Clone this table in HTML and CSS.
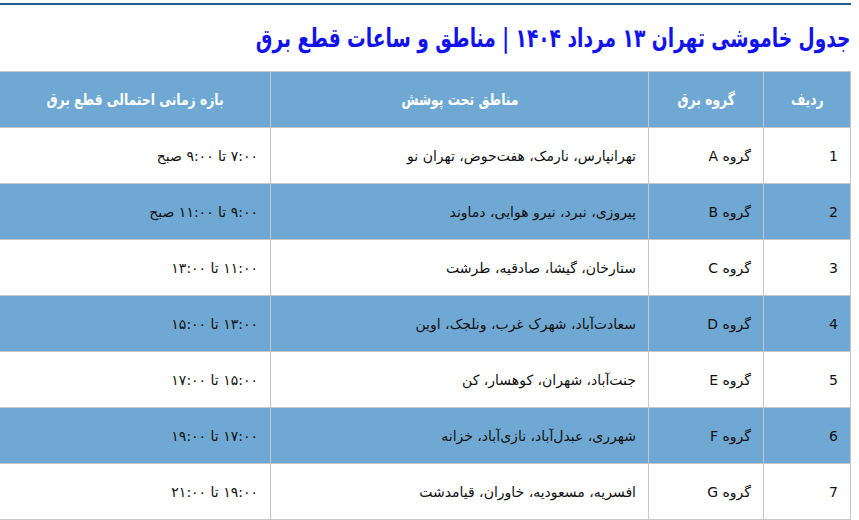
FILE: index.html
```html
<!DOCTYPE html>
<html lang="fa" dir="rtl">
<head>
<meta charset="utf-8">
<title>جدول خاموشی تهران</title>
<link rel="stylesheet" href="styles.css">
</head>
<body>
<div class="page">
  <div class="topline"></div>
  <h1 class="title"><span class="squeeze">جدول خاموشی تهران ۱۳ مرداد ۱۴۰۴ | مناطق و ساعات قطع برق</span></h1>
  <table class="schedule">
    <colgroup>
      <col class="c-num">
      <col class="c-group">
      <col class="c-area">
      <col class="c-time">
    </colgroup>
    <thead>
      <tr>
        <th><span class="squeeze-th">ردیف</span></th>
        <th><span class="squeeze-th">گروه برق</span></th>
        <th><span class="squeeze-th">مناطق تحت پوشش</span></th>
        <th><span class="squeeze-th">بازه زمانی احتمالی قطع برق</span></th>
      </tr>
    </thead>
    <tbody>
      <tr><td>1</td><td>گروه A</td><td>تهرانپارس، نارمک، هفت‌حوض، تهران نو</td><td>۷:۰۰ تا ۹:۰۰ صبح</td></tr>
      <tr class="alt"><td>2</td><td>گروه B</td><td>پیروزی، نبرد، نیرو هوایی، دماوند</td><td>۹:۰۰ تا ۱۱:۰۰ صبح</td></tr>
      <tr><td>3</td><td>گروه C</td><td>ستارخان، گیشا، صادقیه، طرشت</td><td>۱۱:۰۰ تا ۱۳:۰۰</td></tr>
      <tr class="alt"><td>4</td><td>گروه D</td><td>سعادت‌آباد، شهرک غرب، ونلجک، اوین</td><td>۱۳:۰۰ تا ۱۵:۰۰</td></tr>
      <tr><td>5</td><td>گروه E</td><td>جنت‌آباد، شهران، کوهسار، کن</td><td>۱۵:۰۰ تا ۱۷:۰۰</td></tr>
      <tr class="alt"><td>6</td><td>گروه F</td><td>شهرری، عبدل‌آباد، نازی‌آباد، خزانه</td><td>۱۷:۰۰ تا ۱۹:۰۰</td></tr>
      <tr><td>7</td><td>گروه G</td><td>افسریه، مسعودیه، خاوران، قیامدشت</td><td>۱۹:۰۰ تا ۲۱:۰۰</td></tr>
    </tbody>
  </table>
</div>
</body>
</html>
```

FILE: styles.css
```css
html, body {
  margin: 0;
  padding: 0;
  background: #ffffff;
}
body {
  font-family: "DejaVu Sans", "Noto Sans", sans-serif;
  color: #111111;
}
.page {
  width: 851px;
  margin: 0 auto 0 0;
  direction: rtl;
}
.topline {
  height: 2px;
  margin-top: 3px;
  background: #1b5c8c;
}
.title {
  margin: 0;
  padding: 16px 1px 16px 0;
  height: 34px;
  line-height: 34px;
  font-family: "DejaVu Sans", sans-serif;
  font-size: 26px;
  font-weight: bold;
  color: #1212ec;
  text-align: right;
  white-space: nowrap;
}
.squeeze {
  display: inline-block;
  transform: scaleX(0.716);
  transform-origin: right center;
}
.schedule {
  width: 851px;
  border-collapse: collapse;
  table-layout: fixed;
  font-size: 14px;
}
.c-num { width: 87px; }
.c-group { width: 115px; }
.c-area { width: 378px; }
.c-time { width: 271px; }
.schedule th,
.schedule td {
  border: 1px solid #c6c6c6;
  height: 56px;
  padding: 0 12px;
  box-sizing: border-box;
  white-space: nowrap;
}
.schedule th {
  background: #6fa9d3;
  color: #ffffff;
  font-weight: bold;
  text-align: center;
  font-size: 16px;
}
.squeeze-th {
  display: inline-block;
  transform: scaleX(0.77);
}
.schedule td {
  text-align: right;
  background: #ffffff;
}
.schedule tr.alt td {
  background: #6fa9d3;
}
```
